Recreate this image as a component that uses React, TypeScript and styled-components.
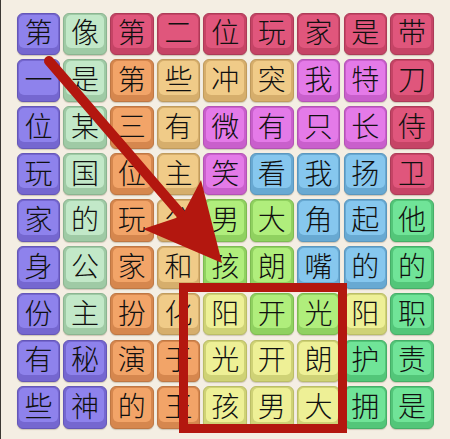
import React from "react";
import styled, { createGlobalStyle } from "styled-components";

type Tone = "P" | "M" | "R" | "O" | "T" | "Mg" | "B" | "L" | "Y" | "G";

const PALETTE: Record<Tone, { face: string; base: string; edge: string }> = {
  P: { face: "#8e82ec", base: "#7567d0", edge: "#6456b8" },
  M: { face: "#c2e8c8", base: "#9fcaa5", edge: "#8bb591" },
  R: { face: "#e0567c", base: "#c64466", edge: "#ad3a58" },
  O: { face: "#f2a468", base: "#d6874e", edge: "#bf7743" },
  T: { face: "#f0cb88", base: "#d6ae6c", edge: "#c09b5c" },
  Mg: { face: "#e47ae8", base: "#c95fcc", edge: "#b352b5" },
  B: { face: "#86c7ee", base: "#68a9d2", edge: "#5a97bf" },
  L: { face: "#b0ee7c", base: "#90d160", edge: "#7dbc51" },
  Y: { face: "#eef096", base: "#cfd276", edge: "#bbbe66" },
  G: { face: "#70e498", base: "#53c679", edge: "#45af68" },
};

// each cell: character + tone
const BOARD: string[][] = [
  ["第P", "像M", "第R", "二R", "位R", "玩R", "家R", "是R", "带R"],
  ["一P", "是M", "第O", "些T", "冲T", "突T", "我Mg", "特Mg", "刀R"],
  ["位P", "某M", "三O", "有T", "微Mg", "有Mg", "只Mg", "长Mg", "侍R"],
  ["玩P", "国M", "位O", "主T", "笑Mg", "看B", "我B", "扬B", "卫R"],
  ["家P", "的M", "玩O", "公T", "男L", "大L", "角B", "起B", "他G"],
  ["身P", "公M", "家O", "和T", "孩L", "朗L", "嘴B", "的B", "的G"],
  ["份P", "主M", "扮O", "化T", "阳Y", "开L", "光L", "阳Y", "职G"],
  ["有P", "秘P", "演O", "于O", "光Y", "开Y", "朗Y", "护G", "责G"],
  ["些P", "神P", "的O", "王O", "孩Y", "男Y", "大Y", "拥G", "是G"],
];

const GlobalStyle = createGlobalStyle`
  html, body {
    margin: 0;
    padding: 0;
    background: #f4eee3;
  }
  body {
    font-family: "Noto Sans CJK SC", "Noto Sans", sans-serif;
  }
`;

const Page = styled.div`
  position: relative;
  width: 450px;
  height: 439px;
  box-sizing: border-box;
  border-left: 1px solid #3b3833;
  background: #f4eee3;
  overflow: hidden;
`;

const Board = styled.div`
  display: grid;
  grid-template-columns: repeat(9, 43.5px);
  grid-template-rows: repeat(9, 42.5px);
  column-gap: 3.2px;
  row-gap: 4.2px;
  padding: 12.7px 0 0 15.7px;
`;

const Tile = styled.div<{ $tone: Tone }>`
  box-sizing: border-box;
  display: flex;
  padding: 1px 1.5px 6px;
  border-radius: 6px;
  border: 1px solid ${({ $tone }) => PALETTE[$tone].edge};
  background: ${({ $tone }) => PALETTE[$tone].base};
  box-shadow: 0 1px 1px rgba(90, 70, 40, 0.25);
`;

const Face = styled.div<{ $tone: Tone }>`
  flex: 1;
  display: flex;
  align-items: center;
  justify-content: center;
  border-radius: 5px;
  background: ${({ $tone }) => PALETTE[$tone].face};
  color: #101010;
  font-size: 28px;
  font-weight: 300;
  line-height: 1;
`;

const Overlay = styled.svg`
  position: absolute;
  left: 0;
  top: 0;
  pointer-events: none;
`;

const RED = "#b3170f";

export default function App() {
  return (
    <>
      <GlobalStyle />
      <Page>
        <Board>
          {BOARD.flatMap((row, r) =>
            row.map((cell, c) => {
              const ch = cell.slice(0, 1);
              const tone = cell.slice(1) as Tone;
              return (
                <Tile key={`${r}-${c}`} $tone={tone}>
                  <Face $tone={tone}>{ch}</Face>
                </Tile>
              );
            })
          )}
        </Board>
        <Overlay width="450" height="439" viewBox="0 0 450 439">
          <line
            x1="48"
            y1="61"
            x2="184"
            y2="219"
            stroke={RED}
            strokeWidth="10"
            strokeLinecap="round"
          />
          <polygon points="221,263 200,180 181,216 142,229" fill={RED} />
          <rect
            x="182.5"
            y="287.5"
            width="159"
            height="141"
            fill="none"
            stroke={RED}
            strokeWidth="9"
          />
        </Overlay>
      </Page>
    </>
  );
}
